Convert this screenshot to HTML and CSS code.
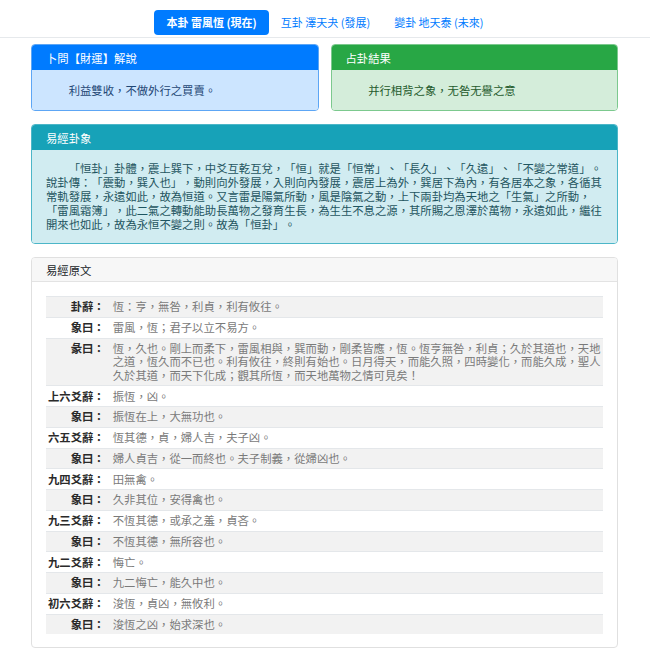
FILE: index.html
```html
<!DOCTYPE html>
<html lang="zh-Hant">
<head>
<meta charset="utf-8">
<title>雷風恆</title>
<link rel="stylesheet" href="styles.css">
</head>
<body>
<nav class="tabs">
  <a class="tab active">本卦 雷風恆 (現在)</a>
  <a class="tab">互卦 澤天夬 (發展)</a>
  <a class="tab">變卦 地天泰 (未來)</a>
</nav>
<main class="page">
  <div class="row">
    <section class="card card-primary">
      <header class="card-header">卜問【財運】解說</header>
      <div class="card-body indent">利益雙收，不做外行之買賣。</div>
    </section>
    <section class="card card-success">
      <header class="card-header">占卦結果</header>
      <div class="card-body indent">并行相背之象，无咎无譽之意</div>
    </section>
  </div>
  <section class="card card-info">
    <header class="card-header">易經卦象</header>
    <div class="card-body indent">「恒卦」卦體，震上巽下，中爻互乾互兌，「恒」就是「恒常」、「長久」、「久遠」、「不變之常道」。說卦傳：「震動，巽入也」，動則向外發展，入則向內發展，震居上為外，巽居下為內，有各居本之象，各循其常軌發展，永遠如此，故為恒道。又言雷是陽氣所動，風是陰氣之動，上下兩卦均為天地之「生氣」之所動，「雷風霜簿」，此二氣之轉動能助長萬物之發育生長，為生生不息之源，其所賜之恩澤於萬物，永遠如此，繼往開來也如此，故為永恒不變之則。故為「恒卦」。</div>
  </section>
  <section class="card card-plain">
    <header class="card-header">易經原文</header>
    <div class="card-body">
      <table class="verses">
        <tr><th>卦辭：</th><td>恆：亨，無咎，利貞，利有攸往。</td></tr>
        <tr><th>象曰：</th><td>雷風，恆；君子以立不易方。</td></tr>
        <tr><th>彖曰：</th><td>恆，久也。剛上而柔下，雷風相與，巽而動，剛柔皆應，恆。恆亨無咎，利貞；久於其道也，天地之道，恆久而不已也。利有攸往，終則有始也。日月得天，而能久照，四時變化，而能久成，聖人久於其道，而天下化成；觀其所恆，而天地萬物之情可見矣！</td></tr>
        <tr><th>上六爻辭：</th><td>振恆，凶。</td></tr>
        <tr><th>象曰：</th><td>振恆在上，大無功也。</td></tr>
        <tr><th>六五爻辭：</th><td>恆其德，貞，婦人吉，夫子凶。</td></tr>
        <tr><th>象曰：</th><td>婦人貞吉，從一而終也。夫子制義，從婦凶也。</td></tr>
        <tr><th>九四爻辭：</th><td>田無禽。</td></tr>
        <tr><th>象曰：</th><td>久非其位，安得禽也。</td></tr>
        <tr><th>九三爻辭：</th><td>不恆其德，或承之羞，貞吝。</td></tr>
        <tr><th>象曰：</th><td>不恆其德，無所容也。</td></tr>
        <tr><th>九二爻辭：</th><td>悔亡。</td></tr>
        <tr><th>象曰：</th><td>九二悔亡，能久中也。</td></tr>
        <tr><th>初六爻辭：</th><td>浚恆，貞凶，無攸利。</td></tr>
        <tr><th>象曰：</th><td>浚恆之凶，始求深也。</td></tr>
      </table>
    </div>
  </section>
</main>
</body>
</html>
```
FILE: styles.css
```css
* { box-sizing: border-box; }
html, body { margin: 0; padding: 0; background: #fff; }
body {
  font-family: "Noto Sans CJK TC", "Liberation Sans", sans-serif;
  font-size: 11.35px;
  color: #212529;
  text-spacing-trim: space-all;
}

.tabs {
  display: flex;
  justify-content: center;
  padding: 10px 0 2px;
  border-bottom: 1px solid #e6e9ec;
}
.tab {
  display: block;
  padding: 4px 12px;
  line-height: 17px;
  font-size: 11px;
  color: #007bff;
  border-radius: 4px;
  text-decoration: none;
}
.tab.active {
  background: #007bff;
  color: #fff;
  font-weight: 700;
}

.page {
  padding: 6px 32px 0 31px;
  display: flex;
  flex-direction: column;
  gap: 13px;
}
.row {
  display: flex;
  gap: 12px;
}
.row .card { flex: 1; }

.card {
  border: 1px solid #dcdcdc;
  border-radius: 4px;
  overflow: hidden;
  background: #fff;
}
.card-header {
  padding: 6px 14px 5px;
  line-height: 14px;
  color: #fff;
}
.card-body {
  padding: 13px 13px 13px 14px;
  line-height: 14px;
}
.indent { text-indent: 2em; }

.card-primary { border-color: #5da6f5; }
.card-primary .card-header { background: #007bff; }
.card-primary .card-body { background: #cce5ff; color: #1f4775; }

.card-success { border-color: #7cc98e; }
.card-success .card-header { background: #28a745; }
.card-success .card-body { background: #d4edda; color: #1f5a2c; }

.card-info { border-color: #4cb6c8; }
.card-info .card-header { background: #17a2b8; }
.card-info .card-body {
  background: #d1ecf1;
  color: #1f5560;
  padding: 11px 13px 12px 14px;
}

.card-plain { border-color: #e0e0e0; }
.card-plain .card-header {
  background: #f7f7f7;
  color: #212529;
  border-bottom: 1px solid #e3e3e3;
  padding: 5px 14px 4px;
}
.card-plain .card-body { padding: 14px 14px 13px 14px; }

.verses {
  width: 100%;
  border-collapse: collapse;
  line-height: 13.5px;
}
.verses tr { border-top: 1px solid #e4e7ea; }
.verses tr:nth-child(odd) { background: #f2f2f2; }
.verses th {
  text-align: right;
  font-weight: 700;
  white-space: nowrap;
  vertical-align: top;
  color: #2a2a2a;
  padding: 3.25px 6px 3px 2px;
  width: 1%;
}
.verses td {
  color: #7a7a7a;
  padding: 3.25px 1px 3px 2px;
  vertical-align: top;
}
```
